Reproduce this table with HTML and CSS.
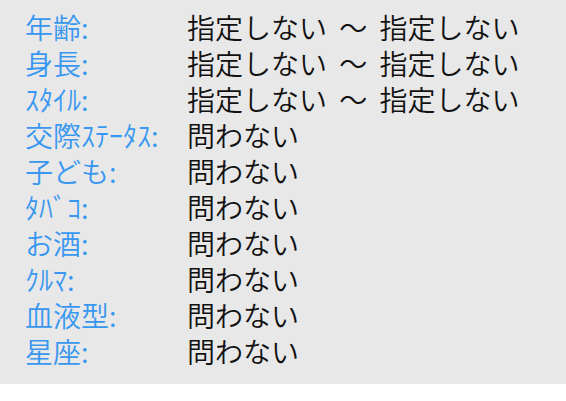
FILE: index.html
```html
<!DOCTYPE html>
<html lang="ja">
<head>
<meta charset="utf-8">
<link rel="stylesheet" href="styles.css">
</head>
<body>
<div class="panel">
  <dl class="profile">
    <dt>年齢:</dt><dd>指定しない ～ 指定しない</dd>
    <dt>身長:</dt><dd>指定しない ～ 指定しない</dd>
    <dt>ｽﾀｲﾙ:</dt><dd>指定しない ～ 指定しない</dd>
    <dt>交際ｽﾃｰﾀｽ:</dt><dd>問わない</dd>
    <dt>子ども:</dt><dd>問わない</dd>
    <dt>ﾀﾊﾞｺ:</dt><dd>問わない</dd>
    <dt>お酒:</dt><dd>問わない</dd>
    <dt>ｸﾙﾏ:</dt><dd>問わない</dd>
    <dt>血液型:</dt><dd>問わない</dd>
    <dt>星座:</dt><dd>問わない</dd>
  </dl>
</div>
</body>
</html>
```
FILE: styles.css
```css
html, body {
  margin: 0;
  padding: 0;
  background: #ffffff;
}
.panel {
  background: #e8e8e8;
  height: 384px;
  box-sizing: border-box;
  padding: 9px 0 0 25px;
}
.profile {
  margin: 0;
  display: grid;
  grid-template-columns: 162px auto;
  grid-auto-rows: 36px;
  font-family: "Noto Sans CJK JP", "Noto Sans", sans-serif;
  font-size: 28px;
  font-weight: 350;
  line-height: 36px;
}
.profile dt {
  color: #3897f0;
  white-space: nowrap;
}
.profile dd {
  margin: 0;
  color: #111111;
  white-space: pre;
  word-spacing: 6px;
}
```
